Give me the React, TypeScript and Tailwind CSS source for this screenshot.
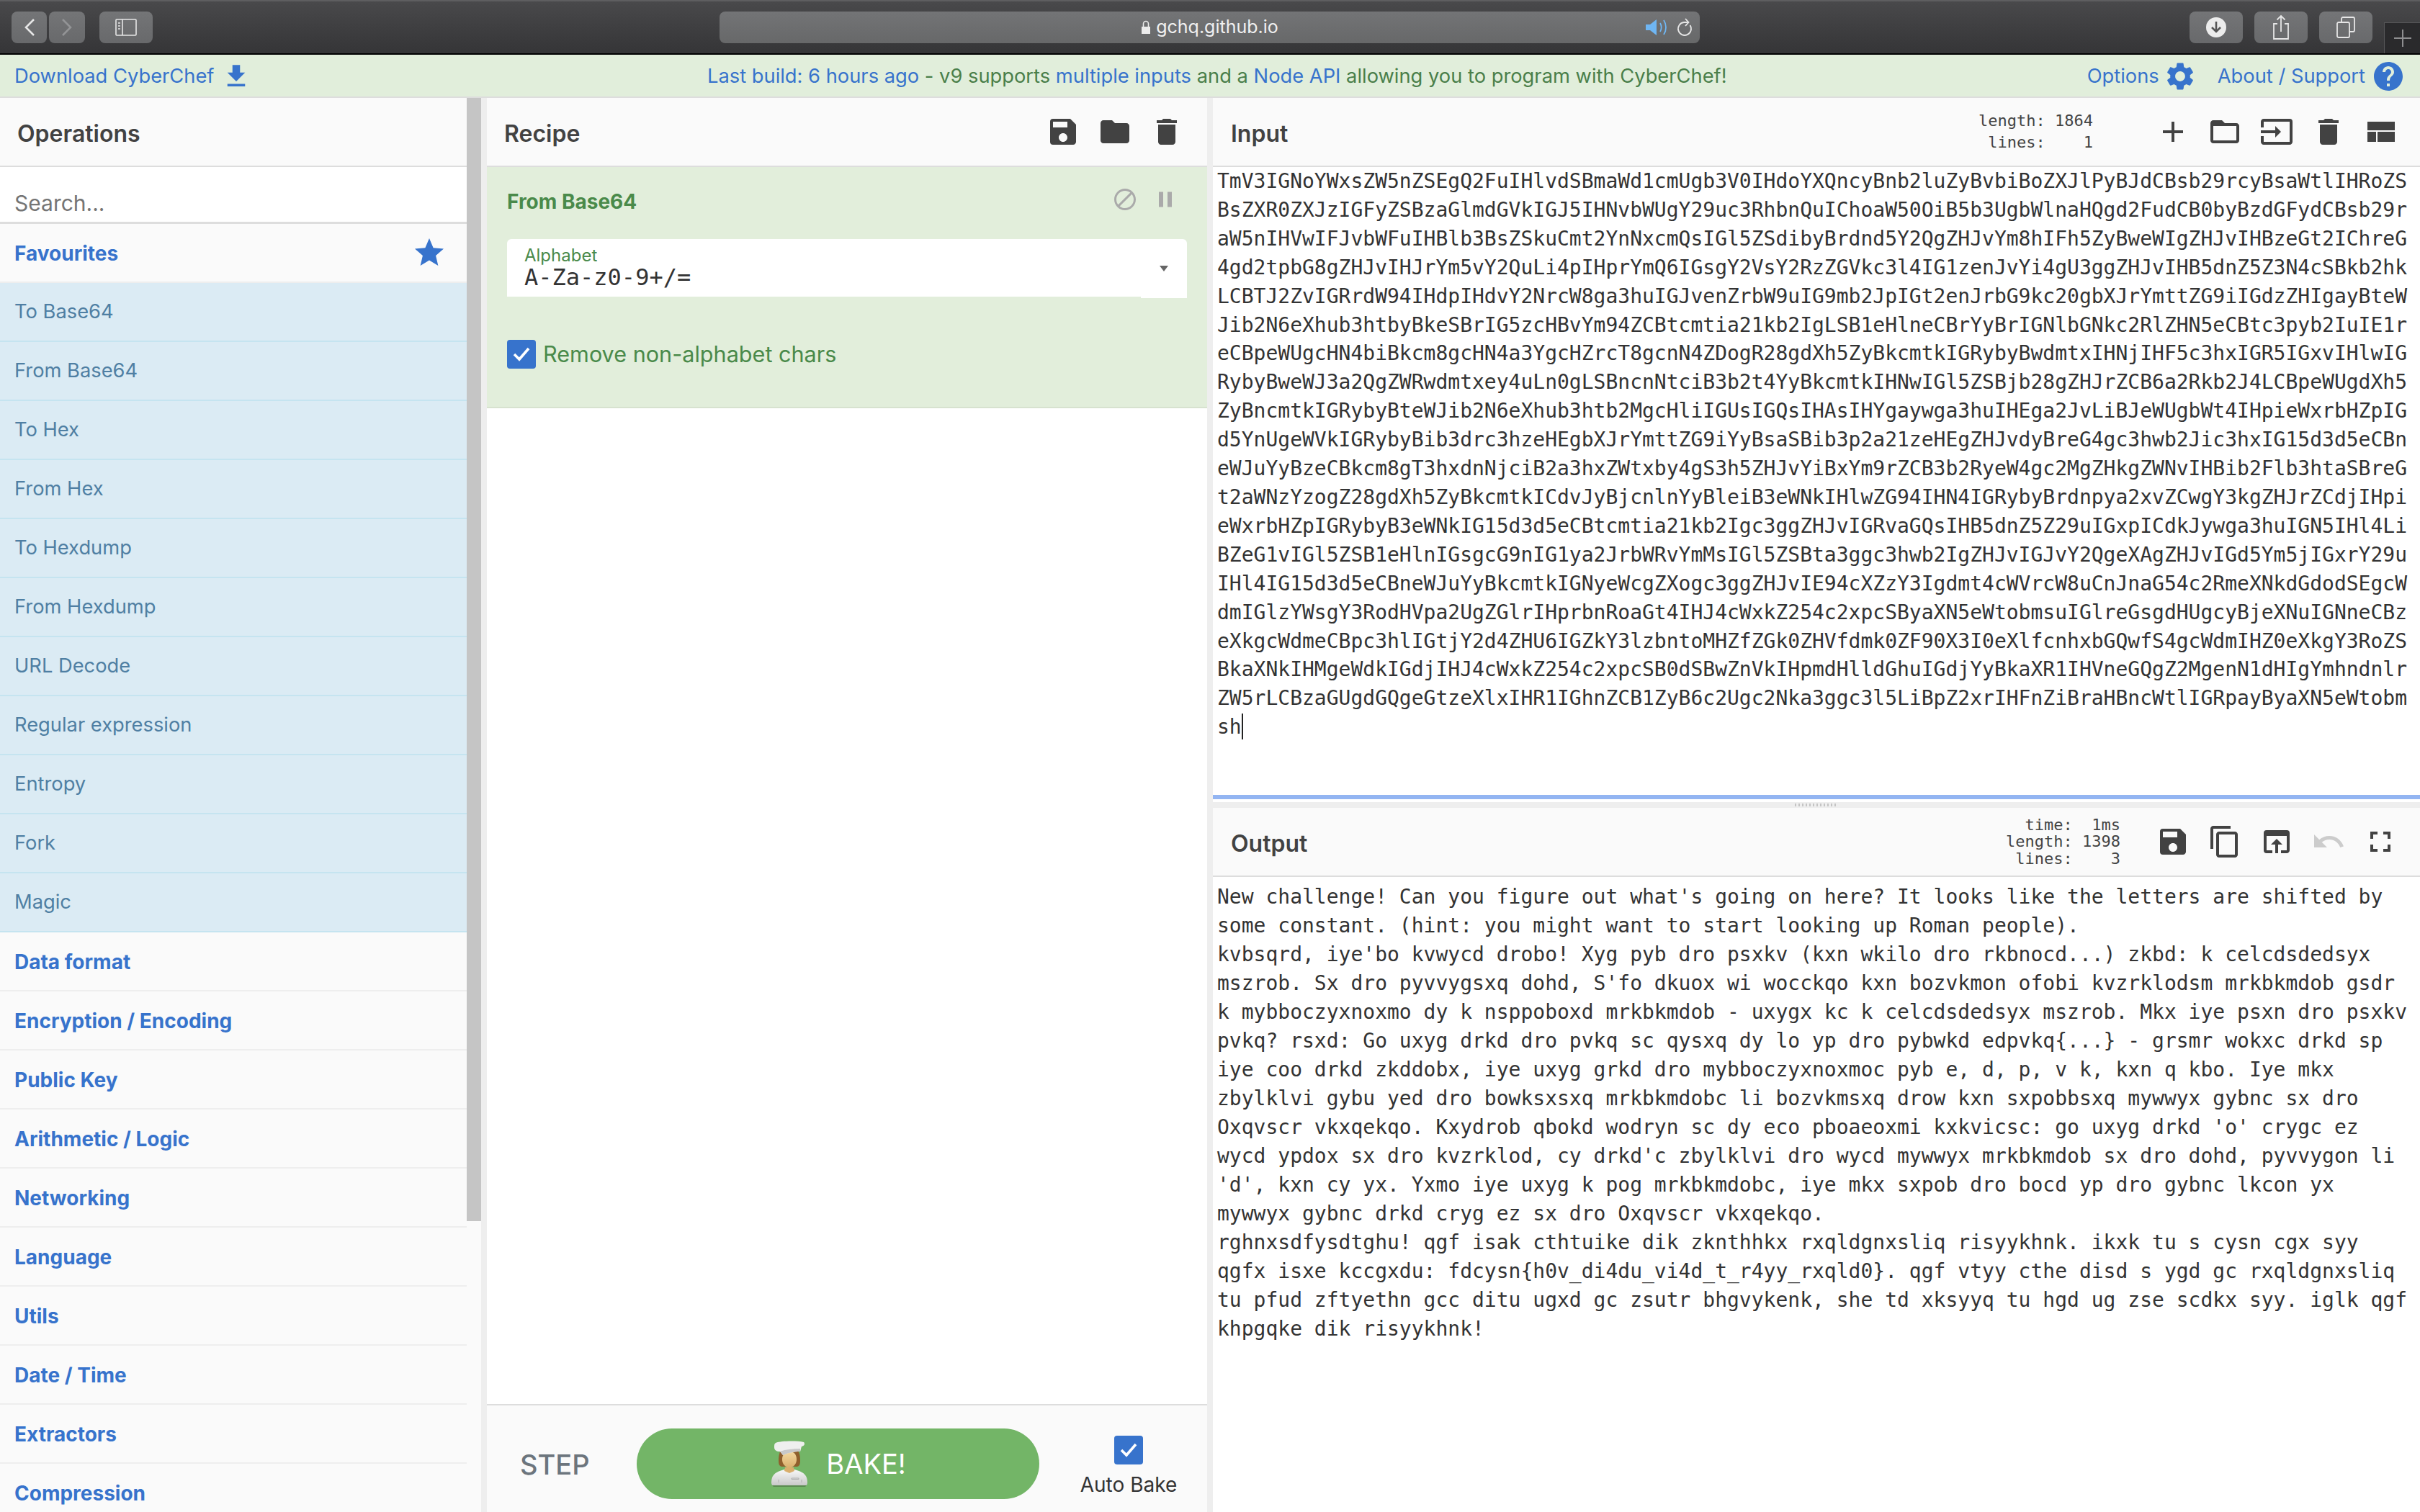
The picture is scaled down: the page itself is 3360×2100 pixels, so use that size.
import type { ReactNode } from "react";
import {
  MdAdd, MdContentCopy, MdDelete, MdDoNotDisturbAlt, MdFileDownload, MdFolder,
  MdFolderOpen, MdFullscreen, MdHelp, MdInput, MdOpenInBrowser, MdPause, MdSave, MdSettings,
  MdStar, MdUndo,
} from "react-icons/md";

const favourites = [
  "To Base64", "From Base64", "To Hex", "From Hex", "To Hexdump", "From Hexdump",
  "URL Decode", "Regular expression", "Entropy", "Fork", "Magic",
];
const categories = [
  "Data format", "Encryption / Encoding", "Public Key", "Arithmetic / Logic", "Networking",
  "Language", "Utils", "Date / Time", "Extractors", "Compression",
];

const OUTPUT = [
  "New challenge! Can you figure out what's going on here? It looks like the letters are shifted by some constant. (hint: you might want to start looking up Roman people).",
  "kvbsqrd, iye'bo kvwycd drobo! Xyg pyb dro psxkv (kxn wkilo dro rkbnocd...) zkbd: k celcdsdedsyx mszrob. Sx dro pyvvygsxq dohd, S'fo dkuox wi wocckqo kxn bozvkmon ofobi kvzrklodsm mrkbkmdob gsdr k mybboczyxnoxmo dy k nsppoboxd mrkbkmdob - uxygx kc k celcdsdedsyx mszrob. Mkx iye psxn dro psxkv pvkq? rsxd: Go uxyg drkd dro pvkq sc qysxq dy lo yp dro pybwkd edpvkq{...} - grsmr wokxc drkd sp iye coo drkd zkddobx, iye uxyg grkd dro mybboczyxnoxmoc pyb e, d, p, v k, kxn q kbo. Iye mkx zbylklvi gybu yed dro bowksxsxq mrkbkmdobc li bozvkmsxq drow kxn sxpobbsxq mywwyx gybnc sx dro Oxqvscr vkxqekqo. Kxydrob qbokd wodryn sc dy eco pboaeoxmi kxkvicsc: go uxyg drkd 'o' crygc ez wycd ypdox sx dro kvzrklod, cy drkd'c zbylklvi dro wycd mywwyx mrkbkmdob sx dro dohd, pyvvygon li 'd', kxn cy yx. Yxmo iye uxyg k pog mrkbkmdobc, iye mkx sxpob dro bocd yp dro gybnc lkcon yx mywwyx gybnc drkd cryg ez sx dro Oxqvscr vkxqekqo.",
  "rghnxsdfysdtghu! qgf isak cthtuike dik zknthhkx rxqldgnxsliq risyykhnk. ikxk tu s cysn cgx syy qgfx isxe kccgxdu: fdcysn{h0v_di4du_vi4d_t_r4yy_rxqld0}. qgf vtyy cthe disd s ygd gc rxqldgnxsliq tu pfud zftyethn gcc ditu ugxd gc zsutr bhgvykenk, she td xksyyq tu hgd ug zse scdkx syy. iglk qgf khpgqke dik risyykhnk!",
].join("\n");

// the input pane holds the base64 of the output
const INPUT = btoa(OUTPUT);

function ToolbarButton({ className, children }: { className: string; children: ReactNode }) {
  return (
    <div className={`h-[44px] rounded-[8px] bg-gradient-to-b from-[#747577] to-[#68696b] flex items-center justify-center ${className}`}>
      {children}
    </div>
  );
}

function BrowserBar() {
  return (
    <div className="h-[76px] shrink-0 flex items-start pt-[16px] bg-gradient-to-b from-[#49494b] to-[#353537] border-t-2 border-t-[#5e5e60] border-b-2 border-b-black relative">
      <div className="-mt-[2px] flex items-center w-full">
        <ToolbarButton className="ml-[16px] w-[49px]">
          <svg width="16" height="26" viewBox="0 0 16 26" fill="none" stroke="#e6e6e6" strokeWidth="2.6">
            <path d="M14 2 3 13l11 11" />
          </svg>
        </ToolbarButton>
        <ToolbarButton className="ml-[3px] w-[50px]">
          <svg width="16" height="26" viewBox="0 0 16 26" fill="none" stroke="#939496" strokeWidth="2.6">
            <path d="m2 2 11 11L2 24" />
          </svg>
        </ToolbarButton>
        <ToolbarButton className="ml-[20px] w-[74px]">
          <svg width="30" height="24" viewBox="0 0 30 24" fill="none" stroke="#e6e6e6" strokeWidth="1.6">
            <rect x="1" y="1" width="28" height="22" rx="1" />
            <path d="M10 1v22M4 6h3M4 10h3M4 14h3" />
          </svg>
        </ToolbarButton>
        <div className="ml-[787px] w-[1361px] h-[44px] rounded-[8px] bg-gradient-to-b from-[#737476] to-[#676869] flex items-center justify-center relative">
          <span className="text-[#f0f0f0] text-[25px] flex items-center gap-[7px]">
            <svg width="14" height="20" viewBox="0 0 14 20" fill="#ececec">
              <path d="M1 9h12v10H1z" />
              <path d="M3.5 9V5a3.5 3.5 0 0 1 7 0v4" fill="none" stroke="#ececec" strokeWidth="1.6" />
            </svg>
            gchq.github.io
          </span>
          <div className="absolute right-[8px] top-[8px] flex items-center gap-[8px]">
            <svg width="34" height="26" viewBox="0 0 34 26" fill="none">
              <path d="M1 9h6l9-7v22l-9-7H1z" fill="#6fb6f3" />
              <path d="M21 7c2 3.5 2 8.500 0 12M26 3c4 6 4 14 0 20" stroke="#6fb6f3" strokeWidth="1.8" />
            </svg>
            <svg width="26" height="28" viewBox="0 0 26 28" fill="none" stroke="#e6e6e6" strokeWidth="1.8">
              <path d="M20.500 11A9 9 0 1 1 12 7h5" />
              <path d="m14 2 4.500 5-4.500 5" />
            </svg>
          </div>
        </div>
        <ToolbarButton className="ml-[680px] w-[74px]">
          <svg width="28" height="28" viewBox="0 0 28 28">
            <circle cx="14" cy="14" r="14" fill="#ececec" />
            <path d="M14 6v14M8 14l6 6 6-6" stroke="#555" strokeWidth="2.600" fill="none" />
          </svg>
        </ToolbarButton>
        <ToolbarButton className="ml-[16px] w-[74px]">
          <svg width="24" height="36" viewBox="0 0 24 36" fill="none" stroke="#e6e6e6" strokeWidth="1.800">
            <path d="M7 13H2v21h20V13h-5M12 24V2M6.500 7.500 12 2l5.500 5.500" />
          </svg>
        </ToolbarButton>
        <ToolbarButton className="ml-[16px] w-[74px]">
          <svg width="26" height="30" viewBox="0 0 26 30" fill="none" stroke="#e6e6e6" strokeWidth="1.800">
            <rect x="1" y="8" width="17" height="21" rx="2" />
            <path d="M7 8V3a2 2 0 0 1 2-2h14a2 2 0 0 1 2 2v16a2 2 0 0 1-2 2h-5" />
          </svg>
        </ToolbarButton>
      </div>
      {/* new tab corner */}
      <div className="absolute right-0 bottom-0 w-[50px] h-[43px] bg-[#2a2a2c] border-l border-t border-[#565658] flex items-center justify-center">
        <svg width="24" height="24" viewBox="0 0 24 24" stroke="#8e8e90" strokeWidth="2">
          <path d="M12 0v24M0 12h24" />
        </svg>
      </div>
    </div>
  );
}

function Banner() {
  const link = "text-[#3773cc]";
  return (
    <div className="h-[60px] shrink-0 pt-[2px] bg-[#e1eedb] border-b-2 border-[#dddddd] flex items-center text-[27.3px] text-[#4a7f4a]">
      <div className="w-[982px] shrink-0 pl-[20px] flex items-center">
        <span className={link}>Download CyberChef</span>
        <MdFileDownload className="ml-[10px] w-[42px] h-[42px] text-[#3773cc]" />
      </div>
      <div className="whitespace-nowrap">
        <span className={link}>Last build: 6 hours ago</span> - v9 supports{" "}
        <span className={link}>multiple inputs</span> and a <span className={link}>Node API</span> allowing you to program with CyberChef!
      </div>
      <div className="ml-auto pr-[20px] flex items-center">
        <span className={link}>Options</span>
        <MdSettings className="ml-[6px] w-[46px] h-[46px] text-[#3773cc]" />
        <span className={`ml-[29px] ${link}`}>About / Support</span>
        <MdHelp className="ml-[8px] w-[48px] h-[48px] text-[#3773cc]" />
      </div>
    </div>
  );
}

function Sidebar() {
  return (
    <div className="w-[668px] shrink-0 flex">
      <div className="w-[648px] shrink-0">
        <div className="h-[96px] bg-[#fafafa] border-b-2 border-[#dddddd] flex items-center px-[24px] pt-[6px] text-[32px] font-semibold text-[#424242]">
          Operations
        </div>
        <div className="h-[79px] bg-white border-b-[3px] border-[#dddddd] flex items-end pb-[3px] pl-[20px] text-[30px] text-[#757575]">
          Search...
        </div>
        <div className="h-[82px] bg-[#fafafa] border-b-2 border-[#eeeeee] flex items-center justify-between pl-[20px] pr-[28px] text-[28px] font-bold text-[#3773cc]">
          <span className="pt-[1px]">Favourites</span>
          <MdStar className="w-[48px] h-[48px]" />
        </div>
        {favourites.map((name, i) => (
          <div
            key={i}
            className="h-[82px] pt-[1px] bg-[#dbebf4] border-b-2 border-[#c5e4f0] flex items-center pl-[20px] text-[27.3px] text-[#4f7fa3]"
          >
            {name}
          </div>
        ))}
        {categories.map((name, i) => (
          <div
            key={i}
            className="h-[82px] pt-[1px] bg-[#fafafa] border-b-2 border-[#eeeeee] flex items-center pl-[20px] text-[28px] font-bold text-[#3773cc] whitespace-nowrap"
          >
            {name}
          </div>
        ))}
      </div>
      <div className="w-[20px] bg-[#fafafa]">
        <div className="h-[1560px] bg-[#c5c5c5]" />
      </div>
    </div>
  );
}

function Gutter() {
  return <div className="w-[8px] shrink-0 bg-[#eeeeee]" />;
}

function ChefIcon() {
  return (
    <svg width="54" height="66" viewBox="0 0 54 66">
      <defs>
        <linearGradient id="coat" x1="0" y1="0" x2="0" y2="1">
          <stop offset="0" stopColor="#f8f8f8" />
          <stop offset="1" stopColor="#c9c9c9" />
        </linearGradient>
        <linearGradient id="skin" x1="0" y1="0" x2="0" y2="1">
          <stop offset="0" stopColor="#f4d9a0" />
          <stop offset="1" stopColor="#d9ae6c" />
        </linearGradient>
      </defs>
      <path d="M2 60c0-11 4-15 18-19h14c14 4 18 8 18 19l-1 3H3z" fill="url(#coat)" />
      <path d="M3 63h48l-2 2H5z" fill="#5a8a50" />
      <path d="M12 28c0-14 6-18 15-18s15 4 15 18c0 6-1 8-4 9H16c-3-1-4-3-4-9z" fill="#8f5f2c" />
      <path d="M17 27c0-7 4-11 11-11 6 0 9 5 9 11 0 6-4 11-10 12-6-1-10-6-10-12z" fill="url(#skin)" />
      <path d="M21 38h12l1 5-7 3-7-3z" fill="#d9ae6c" />
      <path d="M8 4c8-3 30-3 39-1 2 2 1 5-3 6-1 2-1 5-2 7-8 0-18 2-24 5l-4-5c-5 0-8-2-8-6 0-3 0-5 2-6z" fill="#efefef" />
      <path d="M14 16c8-3 18-4 28-4v4c-8 0-18 2-24 5z" fill="#c8c8c8" />
      <path d="M30 53h10v1.500H30zM12 55v4M44 55v4" stroke="#b0b0b0" fill="none" />
    </svg>
  );
}

function CheckMark() {
  return (
    <svg width="26" height="22" viewBox="0 0 26 22" fill="none" stroke="white" strokeWidth="3.600">
      <path d="m3 11 7 7L23 3" />
    </svg>
  );
}

function Recipe() {
  return (
    <div className="w-[1000px] shrink-0 flex flex-col bg-white">
      <div className="h-[96px] shrink-0 bg-[#fafafa] border-b-2 border-[#dddddd] flex items-center justify-between pl-[24px] pr-[32px] text-[32px] font-semibold text-[#424242]">
        <span className="pt-[6px]">Recipe</span>
        <div className="flex gap-[24px] text-[#424242]">
          <MdSave className="w-[48px] h-[48px]" />
          <MdFolder className="w-[48px] h-[48px]" />
          <MdDelete className="w-[48px] h-[48px]" />
        </div>
      </div>
      <div className="h-[335px] shrink-0 bg-[#e2eedb] border-b-2 border-[#d7e2cf] px-[28px] pt-[30px]">
        <div className="flex items-center justify-between h-[36px] pr-[12px]">
          <span className="text-[28px] font-bold text-[#4a8a4a]">From Base64</span>
          <div className="flex gap-[20px] text-[#aaaaaa] -mt-[6px]">
            <MdDoNotDisturbAlt className="w-[36px] h-[36px]" />
            <MdPause className="w-[36px] h-[36px]" />
          </div>
        </div>
        <div className="mt-[34px] h-[80px] bg-white rounded-t-[6px] pl-[24px] pt-[10px] relative w-[944px]">
          <div className="text-[24px] leading-[26px] text-[#4a8a4a]">Alphabet</div>
          <div className="mt-[1px] text-[32px] leading-[32px] text-[#333333] [font-family:'DejaVu_Sans_Mono',monospace]">A-Za-z0-9+/=</div>
          <div className="absolute right-[26px] top-[37px] w-0 h-0 border-x-[6px] border-x-transparent border-t-[8px] border-t-[#666666]" />
          <div className="absolute right-0 -bottom-[2px] w-[64px] h-[2px] bg-white" />
        </div>
        <div className="mt-[60px] flex items-center h-[40px]">
          <div className="w-[40px] h-[40px] rounded-[4px] bg-[#3773cc] flex items-center justify-center">
            <CheckMark />
          </div>
          <span className="ml-[10px] text-[30.6px] text-[#4a8a4a]">Remove non-alphabet chars</span>
        </div>
      </div>
      <div className="flex-1" />
      <div className="h-[150px] shrink-0 bg-[#fafafa] border-t-2 border-[#dddddd] flex items-start">
        <span className="ml-[46px] mt-[60px] w-[118px] text-[38px] leading-[44px] font-medium text-[#6c757d]">STEP</span>
        <div className="ml-[44px] mt-[32px] w-[559px] h-[98px] rounded-[49px] bg-[#73b567] flex items-center justify-center gap-[24px]">
          <ChefIcon />
          <span className="text-[38px] text-white">BAKE!</span>
        </div>
        <div className="ml-[59px] mt-[42px] w-[130px] flex flex-col items-center">
          <div className="w-[40px] h-[40px] rounded-[4px] bg-[#3773cc] flex items-center justify-center">
            <CheckMark />
          </div>
          <span className="mt-[13px] text-[28px] leading-[30px] text-[#333333] whitespace-nowrap">Auto Bake</span>
        </div>
      </div>
    </div>
  );
}

function LayoutIcon() {
  return (
    <svg width="48" height="48" viewBox="0 0 24 24" fill="currentColor">
      <path d="M3 19h6v-7H3v7zm7 0h12v-7H10v7zM3 5v6h19V5H3z" />
    </svg>
  );
}

function PaneHeader({ title, stats, statsGap, children }: { title: string; stats: string; statsGap: string; children: ReactNode }) {
  return (
    <div className="h-[96px] shrink-0 bg-[#fafafa] border-b-2 border-[#dddddd] flex items-center pl-[25px] pr-[31px] text-[32px] font-semibold text-[#424242]">
      <span className="pt-[6px]">{title}</span>
      <pre className={`ml-auto text-[22px] font-normal text-[#444444] [font-family:'DejaVu_Sans_Mono',monospace] ${statsGap}`}>{stats}</pre>
      <div className="flex gap-[24px] text-[#424242]">{children}</div>
    </div>
  );
}

function Panes() {
  const mono = "[font-family:'DejaVu_Sans_Mono',monospace] text-[28px] text-[#333333] whitespace-pre-wrap";
  return (
    <div className="flex-1 min-w-0 flex flex-col bg-white">
      <PaneHeader title="Input" stats={"length: 1864\n lines:    1"} statsGap="leading-[30px] mr-[87px]">
        <MdAdd className="w-[48px] h-[48px]" />
        <MdFolderOpen className="w-[48px] h-[48px]" />
        <MdInput className="w-[48px] h-[48px]" />
        <MdDelete className="w-[48px] h-[48px]" />
        <LayoutIcon />
      </PaneHeader>
      <div className={`h-[872px] shrink-0 overflow-hidden pl-[6px] pr-[8px] break-all leading-[39.9px] ${mono}`}>
        {INPUT}
        <span className="inline-block w-[2px] h-[36px] bg-[#222222] align-[-8px]" />
      </div>
      <div className="h-[6px] shrink-0 bg-[#93b5f2]" />
      <div className="h-[4px] shrink-0 bg-white" />
      <div className="h-[8px] shrink-0 bg-[#eeeeee] flex items-center justify-center">
        <div className="w-[60px] h-[4px] bg-[repeating-linear-gradient(90deg,#c4c4c4_0_2px,transparent_2px_5px)]" />
      </div>
      <PaneHeader title="Output" stats={"  time:  1ms\nlength: 1398\n lines:    3"} statsGap="leading-[23.500px] mr-[49px]">
        <MdSave className="w-[48px] h-[48px]" />
        <MdContentCopy className="w-[48px] h-[48px]" />
        <MdOpenInBrowser className="w-[48px] h-[48px]" />
        <MdUndo className="w-[48px] h-[48px] text-[#cccccc]" />
        <MdFullscreen className="w-[48px] h-[48px]" />
      </PaneHeader>
      <div className={`flex-1 overflow-hidden pt-[8px] pl-[6px] pr-[8px] leading-[40px] ${mono}`}>{OUTPUT}</div>
    </div>
  );
}

export default function App() {
  return (
    <div className="w-[3360px] h-[2100px] overflow-hidden flex flex-col bg-white [font-family:Inter,sans-serif]">
      <BrowserBar />
      <Banner />
      <div className="flex-1 min-h-0 flex overflow-hidden">
        <Sidebar />
        <Gutter />
        <Recipe />
        <Gutter />
        <Panes />
      </div>
    </div>
  );
}
